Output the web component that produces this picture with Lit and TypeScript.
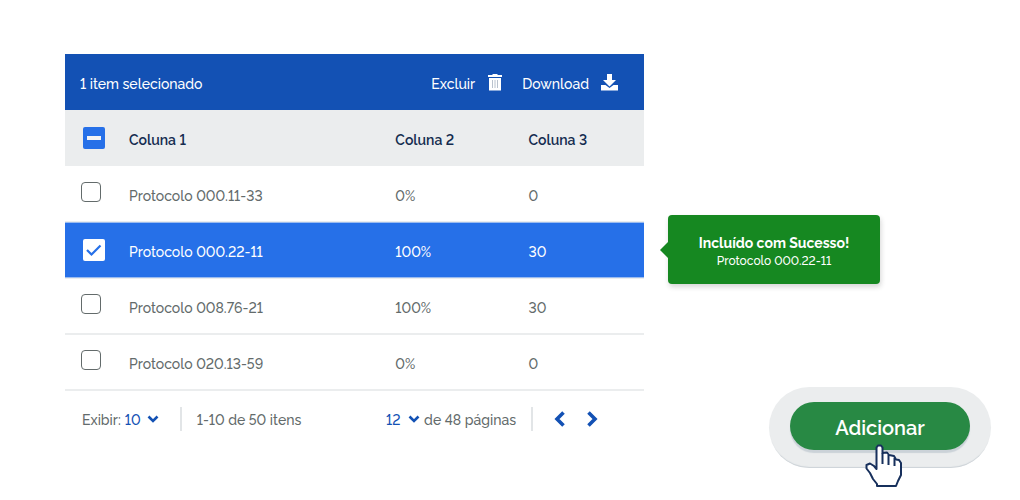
import { LitElement, html, css, svg } from "lit";
import { customElement, state } from "lit/decorators.js";
import { classMap } from "lit/directives/class-map.js";

interface Row {
  name: string;
  percent: string;
  amount: string;
  checked: boolean;
}

const chevron = svg`<path d="M1.5 1.5 L6 6 L10.5 1.5" fill="none" stroke="currentColor" stroke-width="2.6"/>`;

@customElement("app-root")
export class AppRoot extends LitElement {
  @state() private rows: Row[] = [
    { name: "Protocolo 000.11-33", percent: "0%", amount: "0", checked: false },
    { name: "Protocolo 000.22-11", percent: "100%", amount: "30", checked: true },
    { name: "Protocolo 008.76-21", percent: "100%", amount: "30", checked: false },
    { name: "Protocolo 020.13-59", percent: "0%", amount: "0", checked: false },
  ];

  static styles = css`
    :host {
      display: block;
      font-family: Raleway, Lato, sans-serif;
      font-size: 14px;
      font-weight: 500;
      font-variant-numeric: lining-nums;
      line-height: 20px;
      color: #636b6b;
    }
    * { box-sizing: border-box; }
    .page {
      display: grid;
      grid-template-columns: minmax(0, 1fr) 323px;
      column-gap: 24px;
      padding: 54px 29px 32px 65px;
      background: #fff;
    }
    button, select {
      font: inherit;
      font-variant-numeric: inherit;
      color: inherit;
      background: none;
      border: 0;
      padding: 0;
      margin: 0;
      cursor: pointer;
    }
    svg { display: block; flex: none; }
    .toolbar {
      display: flex;
      align-items: center;
      gap: 19px;
      height: 56px;
      padding: 4px 26px 0 15px;
      background: #1351b4;
      color: #fff;
    }
    .count { flex: 1; }
    .tool { display: flex; align-items: center; gap: 12px; }
    .tool svg { margin-bottom: 4px; }
    table {
      width: 100%;
      table-layout: fixed;
      border-collapse: separate;
      border-spacing: 0;
      border-bottom: 1px solid #ebedee;
    }
    th, td { height: 56px; padding: 4px 0 0; text-align: left; }
    th { background: #ebedee; color: #142c50; font-weight: 600; }
    td { border-top: 1px solid #fff; border-bottom: 1px solid #ebedee; }
    tr + tr td { border-top-color: #ebedee; }
    .selected td, tr.selected td {
      background: #2670e8;
      border-top-color: #9bbcf0;
      border-bottom-color: #9bbcf0;
      color: #fff;
    }
    .col-check { width: 64px; }
    .col-name { width: 46%; }
    .col-percent { width: 23%; }
    .pick { padding: 0 0 4px 16px; }
    th.pick { padding: 0 0 0 18px; }
    .selected .pick { padding: 0 0 0 18px; }
    .box {
      appearance: none;
      display: block;
      width: 20px;
      height: 20px;
      margin: 0;
      border: 1px solid #636b6b;
      border-radius: 4px;
      background: #fff center / 100% no-repeat;
    }
    .box:checked, .box.mixed {
      width: 22px;
      height: 22px;
      border: 0;
      border-radius: 2px;
    }
    .box:checked {
      background-image: url("data:image/svg+xml,%3Csvg xmlns='http://www.w3.org/2000/svg' viewBox='0 0 22 22'%3E%3Cpath d='M4 11 L8.5 15.500 L17.5 6.5' fill='none' stroke='%232670e8' stroke-width='2.2'/%3E%3C/svg%3E");
    }
    .box.mixed {
      background-color: #2670e8;
      background-image: url("data:image/svg+xml,%3Csvg xmlns='http://www.w3.org/2000/svg' viewBox='0 0 22 22'%3E%3Cpath d='M4 9h14v4H4z' fill='%23f4f4f4'/%3E%3C/svg%3E");
    }
    .pager {
      display: flex;
      align-items: center;
      gap: 15px;
      height: 56px;
      padding: 0 46px 0 17px;
    }
    .group { display: flex; align-items: center; gap: 4px; padding-top: 2px; }
    .choice { display: flex; align-items: center; gap: 5px; color: #1351b4; }
    .choice svg { margin-bottom: 2px; }
    select { appearance: none; width: 17px; }
    .size { padding-right: 6px; }
    .divider { width: 2px; height: 24px; background: #e2e5e7; }
    .range { flex: 1; padding-top: 2px; }
    .step { width: 12px; color: #1351b4; }
    .arrows { display: flex; gap: 20px; padding-left: 6px; }
    .side {
      display: flex;
      flex-direction: column;
      justify-content: space-between;
      align-items: flex-start;
      gap: 103px;
      padding-top: 161px;
    }
    .toast {
      position: relative;
      width: 212px;
      padding: 18px 8px 14px;
      border-radius: 4px;
      background: #168821;
      box-shadow: 1px 3px 5px rgba(51, 51, 51, 0.2);
      color: #fff;
      text-align: center;
      font-size: 12px;
      line-height: 17px;
    }
    .toast::before {
      content: "";
      position: absolute;
      left: -8px;
      top: 27px;
      border: 8px solid transparent;
      border-left: 0;
      border-right-color: #168821;
    }
    .toast strong { display: block; font-size: 14px; line-height: 20px; }
    .dock {
      position: relative;
      align-self: flex-end;
      width: 222px;
      padding: 15px 21px 18px;
      border-radius: 41px;
      background: #ebedee;
      box-shadow: inset 0 -2px 1px -1px #ccd2d7;
    }
    .add {
      display: block;
      width: 100%;
      height: 48px;
      padding-top: 4px;
      border-radius: 24px;
      background: #288944;
      box-shadow: 0 3px 1px #cbd2d8;
      color: #fff;
      font-size: 20px;
      line-height: 24px;
      font-weight: 600;
    }
    .cursor { position: absolute; left: 96px; top: 57px; pointer-events: none; }
  `;

  private toggle(index: number) {
    this.rows = this.rows.map((r, i) => (i === index ? { ...r, checked: !r.checked } : r));
  }

  render() {
    const total = this.rows.filter((r) => r.checked).length;
    return html`
      <main class="page">
        <section>
          <div class="toolbar">
            <span class="count">${total} item selecionado</span>
            <button class="tool">
              Excluir
              <svg width="16" height="17" viewBox="0 0 16 17">
                <path fill="#fff" d="M1 1h4l1-1h4l1 1h4v2H1z M2 4h12v12.5H2z" />
                <path stroke="#b9c2cd" d="M5.5 6v8 M8 6v8 M10.500 6v8" />
              </svg>
            </button>
            <button class="tool">
              Download
              <svg width="17" height="17" viewBox="0 0 17 17">
                <path fill="#fff" d="M6 0h5v6h4l-6.500 6.500L2 6h4z M0 11h4.500l4 3 4-3H17v5.500H0z" />
              </svg>
            </button>
          </div>
          <table>
            <colgroup>
              <col class="col-check" /><col class="col-name" /><col class="col-percent" /><col />
            </colgroup>
            <thead>
              <tr>
                <th class="pick">
                  <input class="box mixed" type="checkbox" aria-label="Selecionar todos" .indeterminate=${true} />
                </th>
                <th>Coluna 1</th>
                <th>Coluna 2</th>
                <th>Coluna 3</th>
              </tr>
            </thead>
            <tbody>
              ${this.rows.map(
                (r, i) => html`<tr class=${classMap({ selected: r.checked })}>
                  <td class="pick">
                    <input class="box" type="checkbox" aria-label=${r.name} .checked=${r.checked} @change=${() => this.toggle(i)} />
                  </td>
                  <td>${r.name}</td>
                  <td>${r.percent}</td>
                  <td>${r.amount}</td>
                </tr>`
              )}
            </tbody>
          </table>
          <nav class="pager">
            <div class="group size">
              <label for="size">Exibir:</label>
              <span class="choice">
                <select id="size"><option>10</option></select>
                <svg width="12" height="8" viewBox="0 0 12 8">${chevron}</svg>
              </span>
            </div>
            <span class="divider"></span>
            <span class="range">1-10 de 50 itens</span>
            <div class="group">
              <span class="choice">
                <select id="page"><option>12</option></select>
                <svg width="12" height="8" viewBox="0 0 12 8">${chevron}</svg>
              </span>
              <label for="page">de 48 páginas</label>
            </div>
            <span class="divider"></span>
            <div class="arrows">
              <button class="step" aria-label="Anterior">
                <svg width="12" height="16" viewBox="0 0 12 16"><path d="M9.500 1.500 L3 8 L9.500 14.500" fill="none" stroke="currentColor" stroke-width="3.600" /></svg>
              </button>
              <button class="step" aria-label="Próxima">
                <svg width="12" height="16" viewBox="0 0 12 16"><path d="M2.500 1.500 L9 8 L2.500 14.500" fill="none" stroke="currentColor" stroke-width="3.600" /></svg>
              </button>
            </div>
          </nav>
        </section>
        <aside class="side">
          <div class="toast" role="status">
            <strong>Incluído com Sucesso!</strong>
            Protocolo 000.22-11
          </div>
          <div class="dock">
            <button class="add">Adicionar</button>
            <svg class="cursor" width="38" height="46" viewBox="0 0 38 46">
              <path
                d="M12 42 V40 L8 35 L5 29 L1.500 24.500 V21 L5 19.500 L9 22 L11.500 25 V3.500 L13 1.500 H16 L17.500 3.500 V9 L22 8.500 L24 11 L29 12 L31 15.500 L34 16 L36 19 V31 L33 37 L31 42 H12z"
                fill="#fff" stroke="#17305c" stroke-width="2" stroke-linejoin="round" />
              <path d="M17.500 9v11 M23.500 11v10 M29.500 14v8" stroke="#17305c" stroke-width="2" />
            </svg>
          </div>
        </aside>
      </main>
    `;
  }
}
